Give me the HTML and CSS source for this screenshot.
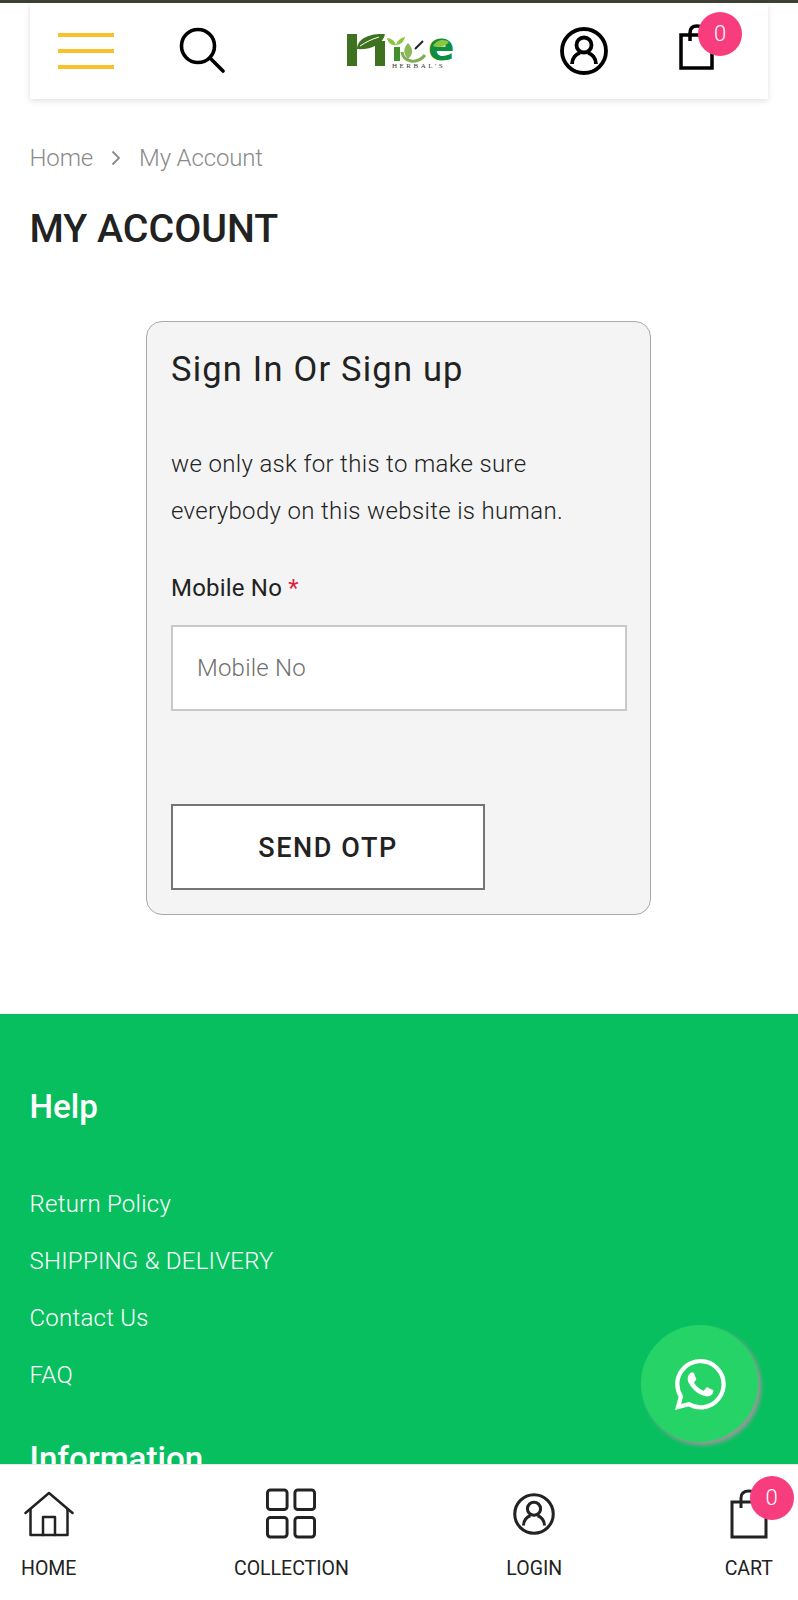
FILE: index.html
```html
<!DOCTYPE html>
<html>

<head>
    <title>My Account - Nice Herbal's</title>
    <meta name="viewport" content="width=device-width, user-scalable=no, minimum-scale=1.0, maximum-scale=1.0">
    <link rel="stylesheet" href="styles.css">
</head>

<body>
    <div class="page">
        <div class="top-strip"></div>

        <div class="header-wrap">
            <header class="header">
                <div class="burger"><span></span><span></span><span></span></div>
                <svg class="search-icon" viewBox="0 0 46 46" fill="none" stroke="#000" stroke-width="3.6" stroke-linecap="round">
                    <circle cx="19" cy="19" r="16.5"/>
                    <path d="M31 31L44 44"/>
                </svg>
                <svg class="logo" viewBox="0 -10 120 60">
                    <rect x="2" y="3" width="10" height="32" fill="#3f7220"/>
                    <rect x="30" y="10" width="10" height="25" fill="#3f7220"/>
                    <path d="M12 18C12 8 24 2 40 3C38 14 25 19 12 18Z" fill="#3f7220"/>
                    <path d="M15 15C21 11 27 8 34 6" stroke="#fff" stroke-width="1" fill="none"/>
                    <path d="M42 7C46 7 50 10 51 14C47 15 43 12 42 7ZM60 6C55 7 52 10 51 14C55 14 59 11 60 6Z" fill="#8cc63f"/>
                    <rect x="49" y="16" width="6" height="14" fill="#3f8f2a"/>
                    <path d="M63 12C68 17 69 23 63 28C58 23 58 17 63 12Z" fill="#8db85a"/>
                    <path d="M57 21C58 31 72 34 80 24" stroke="#7fae52" stroke-width="3" fill="none"/>
                    <path d="M70 18L78 10" stroke="#222" stroke-width="2"/>
                    <text class="logo-e" x="83" y="29">e</text>
                    <path d="M88 15C92 8 100 8 104 11C100 16 93 17 88 15Z" fill="#8cc63f"/>
                    <text class="logo-sub" x="47" y="37">HERBAL'S</text>
                </svg>
                <svg class="user-icon" viewBox="0 0 48 48" fill="none" stroke="#000" stroke-width="3.8">
                    <circle cx="24" cy="24" r="22"/>
                    <circle cx="24" cy="18" r="7.5"/>
                    <path d="M12 37C12 31 16 27 20 26M36 37C36 31 32 27 28 26"/>
                </svg>
                <div class="bag">
                    <svg class="bag-icon" viewBox="0 0 36 46" fill="none" stroke="#000" stroke-width="3.5">
                        <path d="M2 11H33V44H2Z"/>
                        <path d="M11 17V9C11 4 14 2 18 2C22 2 26 4 26 9"/>
                    </svg>
                    <span class="badge">0</span>
                </div>
            </header>
        </div>

        <nav class="crumbs">
            <span>Home</span>
            <svg class="crumb-arrow" viewBox="0 0 10 16" fill="none" stroke="#8a8a8a" stroke-width="1.8">
                <path d="M1.5 1.5L8 8L1.5 14.5"/>
            </svg>
            <span>My Account</span>
        </nav>

        <h1 class="page-title">MY ACCOUNT</h1>

        <section class="login-card">
            <h2>Sign In Or Sign up</h2>
            <p>we only ask for this to make sure everybody on this website is human.</p>
            <label for="mobile">Mobile No <em>*</em></label>
            <input id="mobile" type="text" placeholder="Mobile No">
            <button type="button">SEND OTP</button>
        </section>

        <footer class="footer">
            <h3>Help</h3>
            <ul>
                <li>Return Policy</li>
                <li>SHIPPING &amp; DELIVERY</li>
                <li>Contact Us</li>
                <li>FAQ</li>
            </ul>
            <h3 class="info-title">Information</h3>
        </footer>
    </div>

    <a class="whatsapp">
        <svg viewBox="0 0 16 16" fill="#fff">
            <path d="M13.601 2.326A7.854 7.854 0 0 0 7.994 0C3.627 0 .068 3.558.064 7.926c0 1.399.366 2.76 1.057 3.965L0 16l4.204-1.102a7.933 7.933 0 0 0 3.79.965h.004c4.368 0 7.926-3.558 7.93-7.93A7.898 7.898 0 0 0 13.6 2.326zM7.994 14.521a6.573 6.573 0 0 1-3.356-.92l-.24-.144-2.494.654.666-2.433-.156-.251a6.56 6.56 0 0 1-1.007-3.505c0-3.626 2.957-6.584 6.591-6.584a6.56 6.56 0 0 1 4.66 1.931 6.557 6.557 0 0 1 1.928 4.66c-.004 3.639-2.961 6.592-6.592 6.592zm3.615-4.934c-.197-.099-1.17-.578-1.353-.646-.182-.065-.315-.099-.445.099-.133.197-.513.646-.627.775-.114.133-.232.148-.43.05-.197-.1-.836-.308-1.592-.985-.59-.525-.985-1.175-1.103-1.372-.114-.198-.011-.304.088-.403.087-.088.197-.232.296-.346.1-.114.133-.198.198-.33.065-.134.034-.248-.015-.347-.05-.099-.445-1.076-.612-1.47-.16-.389-.323-.335-.445-.34-.114-.007-.247-.007-.38-.007a.729.729 0 0 0-.529.247c-.182.198-.691.677-.691 1.654 0 .977.71 1.916.81 2.049.098.133 1.394 2.132 3.383 2.992.47.205.84.326 1.129.418.475.152.904.129 1.246.08.38-.058 1.171-.48 1.338-.943.164-.464.164-.86.114-.943-.05-.084-.182-.133-.38-.232z"/>
        </svg>
    </a>

    <div class="bottom-nav">
        <div class="nav-item">
            <svg class="nav-icon" width="50" height="46" viewBox="0 0 50 46" fill="none" stroke="#222" stroke-width="2.5" stroke-linecap="round" stroke-linejoin="round">
                <path d="M1.5 22L25 2L48.5 22"/>
                <path d="M6.5 18V44H43.5V18"/>
                <path d="M19 44V26H31V44"/>
            </svg>
            <span>HOME</span>
        </div>
        <div class="nav-item">
            <svg class="nav-icon" width="52" height="52" viewBox="0 0 52 52" fill="none" stroke="#222" stroke-width="3">
                <rect x="2" y="2" width="20" height="20" rx="3"/>
                <rect x="30" y="2" width="20" height="20" rx="3"/>
                <rect x="2" y="30" width="20" height="20" rx="3"/>
                <rect x="30" y="30" width="20" height="20" rx="3"/>
            </svg>
            <span>COLLECTION</span>
        </div>
        <div class="nav-item nav-login">
            <svg class="nav-icon" width="42" height="42" viewBox="0 0 48 48" fill="none" stroke="#222" stroke-width="3.5">
                <circle cx="24" cy="24" r="22"/>
                <circle cx="24" cy="18" r="7.5"/>
                <path d="M12 37C12 31 16 27 20 26M36 37C36 31 32 27 28 26"/>
            </svg>
            <span>LOGIN</span>
        </div>
        <div class="nav-item nav-cart">
            <svg class="nav-icon" width="38" height="50" viewBox="0 0 38 50" fill="none" stroke="#222" stroke-width="3">
                <path d="M2 13H36V48H2Z"/>
                <path d="M11 19V9C11 4 14 2 19 2C24 2 27 4 27 9"/>
            </svg>
            <span>CART</span>
            <span class="badge">0</span>
        </div>
    </div>
</body>

</html>
```

FILE: styles.css
```css
html,
body {
    margin: 0;
    height: 100%;
    font-family: Roboto, Arial, sans-serif;
    color: #222;
    background: #fff;
}

.page {
    height: 1600px;
    overflow: hidden;
}

.top-strip {
    height: 3px;
    background: #3c4232;
}

.header-wrap {
    padding: 0 30px;
}

.header {
    display: grid;
    grid-template-columns: 121px 166px 215px 119px auto;
    align-items: center;
    height: 96px;
    padding-left: 28px;
    background: #fff;
    box-shadow: 0 2px 6px rgba(0, 0, 0, 0.12);
}

.burger {
    display: flex;
    flex-direction: column;
    gap: 12px;
    width: 56px;
}

.burger span {
    height: 4px;
    background: #fbc02d;
}

.search-icon {
    width: 46px;
    height: 46px;
    margin-bottom: 2px;
}

.logo {
    width: 120px;
    height: 60px;
}

.logo-e {
    font-family: "DejaVu Sans", sans-serif;
    font-size: 39px;
    font-weight: 700;
    fill: #0b8f3c;
}

.logo-sub {
    font-family: "Liberation Serif", serif;
    font-size: 7px;
    letter-spacing: 2.5px;
    fill: #333;
}

.user-icon {
    width: 48px;
    height: 48px;
}

.bag {
    position: relative;
    width: 36px;
    height: 46px;
    margin-bottom: 8px;
}

.bag-icon {
    display: block;
    width: 36px;
    height: 46px;
}

.badge {
    position: absolute;
    width: 44px;
    height: 44px;
    border-radius: 50%;
    background: #f83d7f;
    color: #fff;
    font-size: 22px;
    font-weight: 300;
    line-height: 44px;
    text-align: center;
}

.bag .badge {
    top: -12px;
    left: 19px;
}

.crumbs {
    display: flex;
    align-items: center;
    gap: 18px;
    margin: 44px 0 0 29.5px;
    font-size: 24px;
    font-weight: 300;
    letter-spacing: -0.15px;
    line-height: 30px;
    color: #8a8a8a;
}

.crumb-arrow {
    width: 10px;
    height: 16px;
}

.page-title {
    margin: 31px 0 0 29.5px;
    font-size: 39.3px;
    font-weight: 500;
    line-height: 50px;
    color: #222;
}

.login-card {
    box-sizing: border-box;
    width: 505px;
    height: 594px;
    margin: 67px 0 0 146px;
    padding: 25px 24px 0;
    border: 1px solid #a9a9a9;
    border-radius: 16px;
    background: #f4f4f4;
}

.login-card h2 {
    margin: 0;
    font-size: 34.5px;
    font-weight: 400;
    letter-spacing: 1.2px;
    line-height: 44px;
}

.login-card p {
    margin: 50px 0 0;
    font-size: 24px;
    font-weight: 300;
    letter-spacing: 0.34px;
    line-height: 47px;
}

.login-card label {
    display: block;
    margin-top: 38px;
    font-size: 24px;
    letter-spacing: 0.2px;
    line-height: 30px;
}

.login-card em {
    font-style: normal;
    color: #e02040;
}

.login-card input {
    display: block;
    box-sizing: border-box;
    width: 456px;
    height: 86px;
    margin-top: 22px;
    padding: 0 24px;
    border: 2px solid #c8c8c8;
    border-radius: 0;
    background: #fff;
    font-family: inherit;
    font-size: 24px;
    font-weight: 300;
    letter-spacing: 0.2px;
}

.login-card input::placeholder {
    color: #6f6f6f;
    opacity: 1;
}

.login-card button {
    display: block;
    box-sizing: border-box;
    width: 314px;
    height: 86px;
    margin-top: 93px;
    padding-top: 3px;
    border: 2px solid #757575;
    background: #fff;
    font-family: inherit;
    font-size: 27px;
    font-weight: 500;
    letter-spacing: 1.6px;
    color: #222;
}

.footer {
    margin-top: 99px;
    height: 600px;
    padding: 71px 29.5px 0;
    background: #08bf5f;
    color: #fff;
}

.footer h3 {
    margin: 0;
    font-size: 33.2px;
    font-weight: 500;
    line-height: 44px;
}

.footer ul {
    margin: 47px 0 0;
    padding: 0;
    list-style: none;
    font-size: 24px;
    font-weight: 300;
    letter-spacing: 0.25px;
    line-height: 57px;
}

.footer .info-title {
    margin-top: 33px;
}

.whatsapp {
    position: fixed;
    left: 641px;
    top: 1325px;
    display: flex;
    align-items: center;
    justify-content: center;
    width: 117px;
    height: 117px;
    border-radius: 50%;
    background: #25d366;
    box-shadow: 3px 3px 4px #999;
}

.whatsapp svg {
    width: 51px;
    height: 51px;
    margin: 2px 0 0 1px;
}

.bottom-nav {
    position: fixed;
    left: 0;
    right: 0;
    bottom: 0;
    display: flex;
    justify-content: space-between;
    box-sizing: border-box;
    height: 136px;
    padding: 23px 25px 0 21px;
    border-top: 1px solid #e8e8e8;
    background: #fff;
}

.nav-item {
    position: relative;
    display: flex;
    flex-direction: column;
    align-items: center;
    font-size: 19.5px;
    line-height: 24px;
    color: #222;
}

.nav-login {
    margin-right: 5px;
}

.nav-icon {
    margin: auto 0;
}

.nav-item > span:not(.badge) {
    margin-bottom: 19px;
    padding-top: 18px;
}

.nav-cart .badge {
    top: -12px;
    left: 25px;
}
```
